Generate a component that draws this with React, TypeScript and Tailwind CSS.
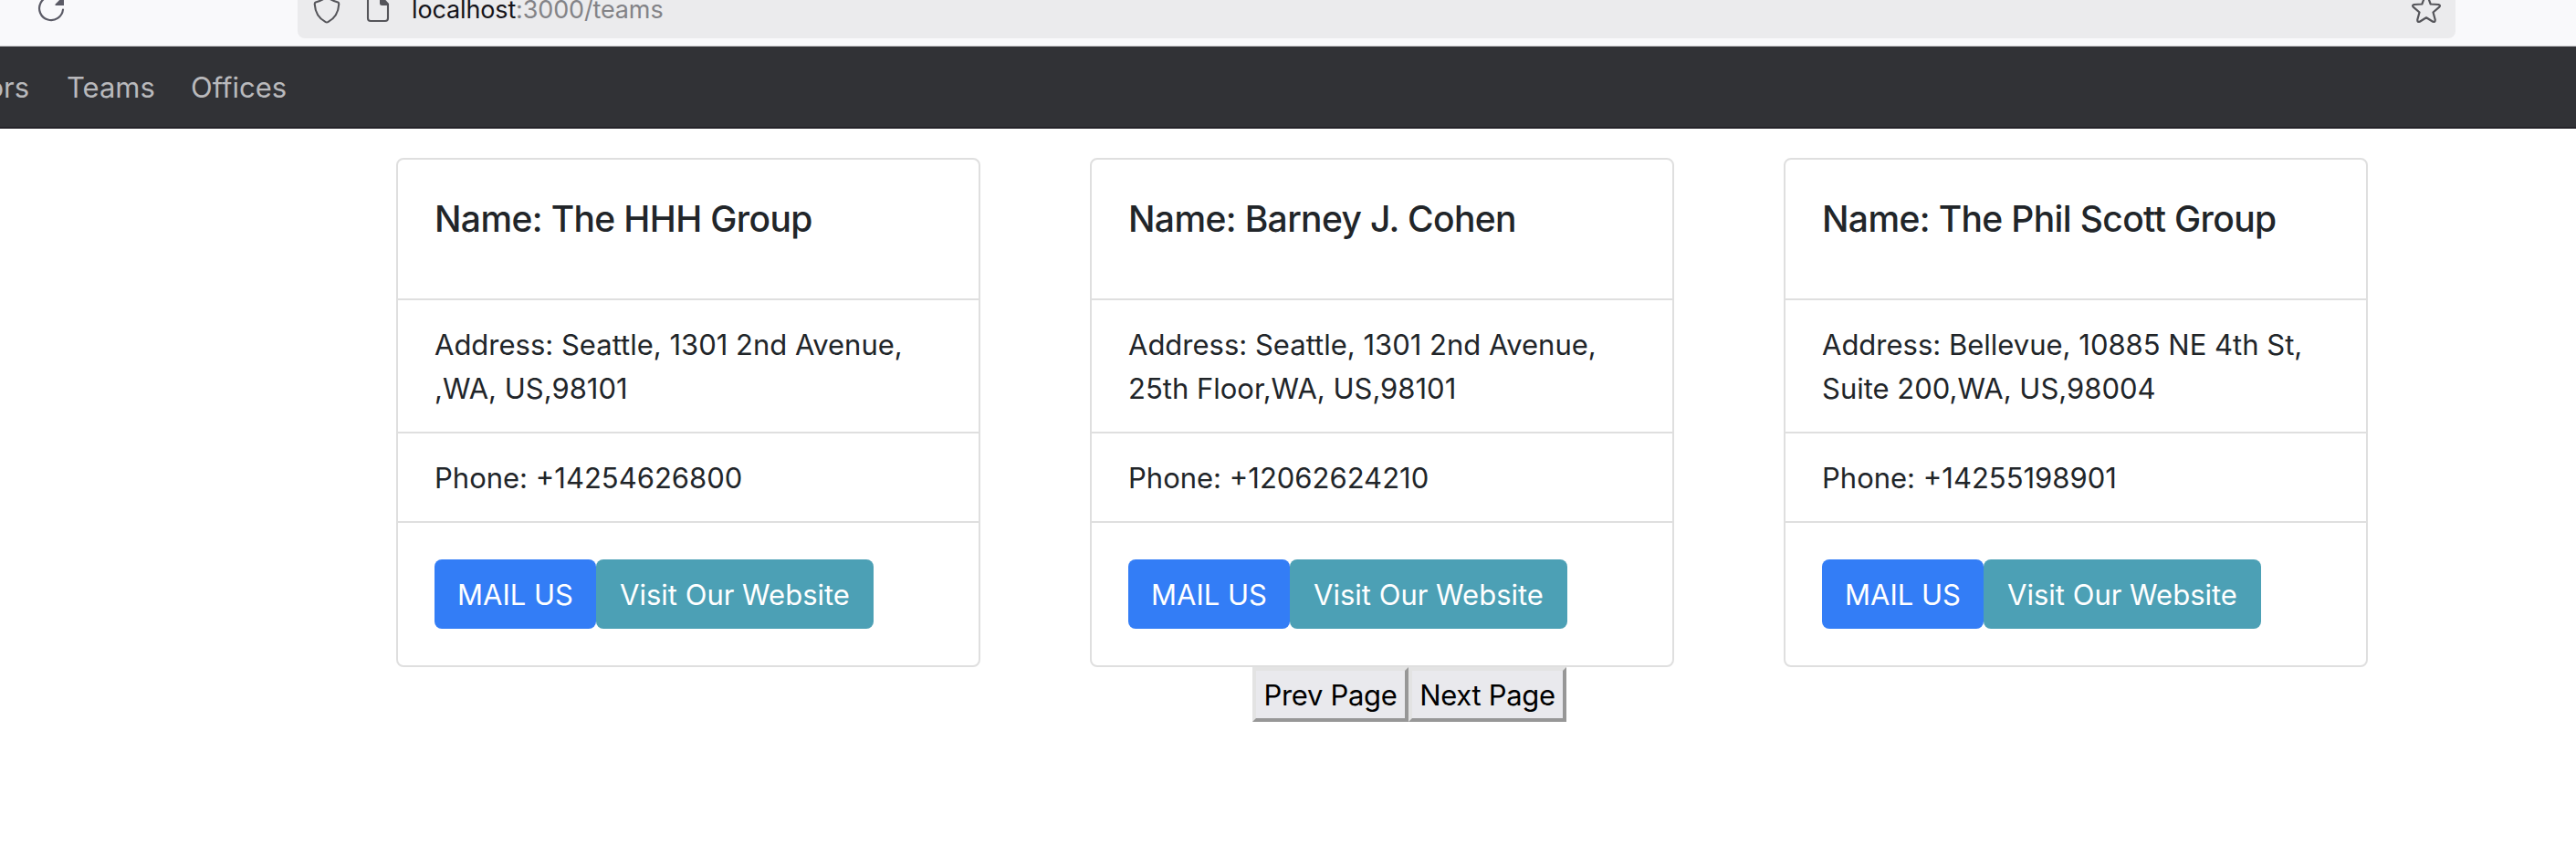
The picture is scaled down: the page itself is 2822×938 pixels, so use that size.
import React from "react";

const teams = [
  { name: "The HHH Group", address: ["Seattle, 1301 2nd Avenue,", ",WA, US,98101"], phone: "+14254626800" },
  { name: "Barney J. Cohen", address: ["Seattle, 1301 2nd Avenue,", "25th Floor,WA, US,98101"], phone: "+12062624210" },
  { name: "The Phil Scott Group", address: ["Bellevue, 10885 NE 4th St,", "Suite 200,WA, US,98004"], phone: "+14255198901" },
];

function BrowserBar() {
  return (
    <div className="flex h-[51px] items-start border-b border-[#c9c9cc] bg-[#f9f9fb]">
      <svg className="ml-[40px] h-[26px] w-[32px] shrink-0" viewBox="0 0 32 26" fill="none">
        <path d="M24 -1.200A13 13 0 1 0 29 10.500" stroke="#5b5b66" strokeWidth="2.2" strokeLinecap="round" />
        <path d="M30 -4V6H21Q20 5.500 20.700 4.600L29 -4Z" fill="#5b5b66" />
      </svg>
      <div className="ml-[254px] flex h-[42px] w-[2364px] shrink-0 items-start rounded-b-lg bg-[#ebebed]">
        <svg className="ml-[17px] h-[28px] w-[30px] shrink-0" viewBox="0 0 30 28" fill="none">
          <path d="M2.800 2.500Q10 0.500 15 -3.500Q20 0.500 27.200 2.500Q28.500 3 28.200 5Q27.500 18 16.300 24.200Q15 24.900 13.700 24.200Q2.500 18 1.800 5Q1.500 3 2.800 2.500Z" stroke="#55555a" strokeWidth="2.1" strokeLinejoin="round" />
        </svg>
        <svg className="ml-[28px] h-[28px] w-[26px] shrink-0" viewBox="0 0 26 28" fill="none">
          <path d="M2 -6V20Q2 23 5 23H21Q24 23 24 20V4" stroke="#55555a" strokeWidth="2.1" />
          <path d="M15 -6V3.500Q15 6 17.500 6H25V4L16 -6Z" fill="#55555a" />
        </svg>
        <div className="-mt-[7px] ml-[24px] text-[27px] leading-[36px] tracking-[-0.14px] text-[#15141a]">
          localhost<span className="text-[#838387]">:3000/teams</span>
        </div>
        <svg className="mr-[15px] ml-auto h-[28px] w-[34px] shrink-0" viewBox="0 0 34 28" fill="none">
          <path d="M17 -8L21.700 4.500L30.500 5Q32.900 5.600 31.300 7.600L24.500 13.500L26.700 21.500Q26.900 24.700 24.200 23.700L17 19.300L9.800 23.700Q7.100 24.700 7.300 21.500L9.500 13.500L2.700 7.600Q1.100 5.600 3.500 5L12.300 4.500Z" stroke="#55555a" strokeWidth="2.2" strokeLinejoin="round" />
        </svg>
      </div>
    </div>
  );
}

function TeamCard({ team }: { team: (typeof teams)[number] }) {
  return (
    <article className="w-[640px] divide-y-2 divide-[#dfdfdf] rounded-lg border-2 border-[#dfdfdf] bg-white">
      <div className="h-[154px] px-10 pt-[41px]">
        <h5 className="text-[39px] leading-[48px] font-medium tracking-[-0.63px] whitespace-nowrap">Name: {team.name}</h5>
      </div>
      <div className="px-10 pt-[25px] pb-[23px]">
        {team.address.map((line, i) => (
          <p key={line} className="whitespace-nowrap">{i === 0 ? "Address: " + line : line}</p>
        ))}
      </div>
      <div className="px-10 pt-[25px] pb-[23px]">Phone: {team.phone}</div>
      <div className="flex p-10">
        <a className="flex h-[76px] w-[177px] items-center justify-center rounded-lg bg-[#337df6] pt-[2px] whitespace-nowrap text-white">MAIL US</a>
        <a className="flex h-[76px] w-[304px] items-center justify-center rounded-lg bg-[#4ca0b5] pt-[2px] whitespace-nowrap text-white">Visit Our Website</a>
      </div>
    </article>
  );
}

export default function App() {
  return (
    <div className="h-[938px] w-[2822px] overflow-hidden bg-white font-['Inter',sans-serif] text-[31px] leading-[48px] text-[#212529]">
      <BrowserBar />
      <nav className="flex h-[90px] items-center border-b-2 border-[#242329] bg-[#313236] pt-[2px] text-[#b9b9bc]">
        <a className="flex w-[32px] justify-end whitespace-nowrap">Realtors</a>
        <a className="ml-[41px] w-[136px]">Teams</a>
        <a>Offices</a>
      </nav>
      <main className="pt-8">
        <div className="flex gap-[120px] pl-[434px]">
          {teams.map((t) => <TeamCard key={t.name} team={t} />)}
        </div>
        <div className="flex pl-[1372px] text-black">
          <button className="flex h-[60px] w-[171px] items-center justify-center border-4 border-t-[#e3e3e3] border-r-[#979797] border-b-[#979797] border-l-[#e3e3e3] bg-[#e9e9ed] pt-[2px] tracking-[-0.3px] whitespace-nowrap">Prev Page</button>
          <button className="flex h-[60px] w-[173px] items-center justify-center border-4 border-t-[#e3e3e3] border-r-[#979797] border-b-[#979797] border-l-[#e3e3e3] bg-[#e9e9ed] pt-[2px] tracking-[-0.3px] whitespace-nowrap">Next Page</button>
        </div>
      </main>
    </div>
  );
}
